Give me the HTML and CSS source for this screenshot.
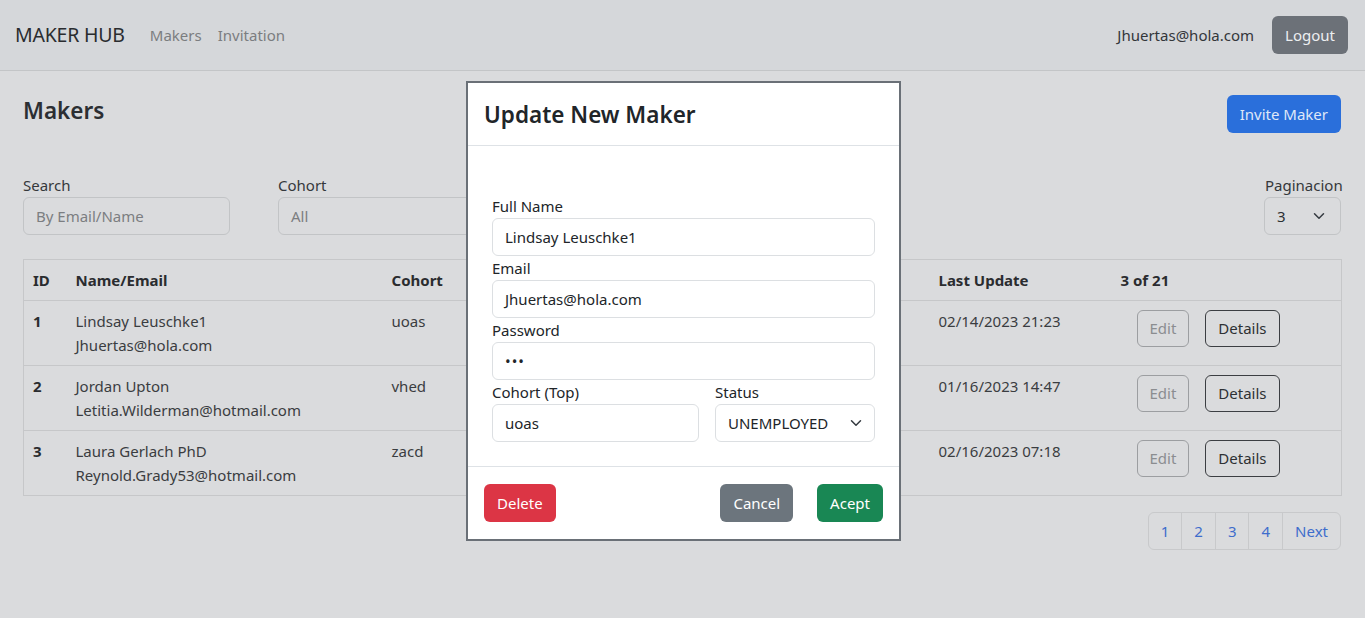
FILE: index.html
```html
<!DOCTYPE html>
<html lang="en">
<head>
<meta charset="utf-8">
<title>Maker Hub</title>
<link rel="stylesheet" href="styles.css">
</head>
<body>
<header class="navbar">
  <div class="nav-left">
    <span class="brand">MAKER HUB</span>
    <nav class="nav-links">
      <a class="nav-link">Makers</a>
      <a class="nav-link">Invitation</a>
    </nav>
  </div>
  <div class="nav-right">
    <span class="user">Jhuertas@hola.com</span>
    <button class="btn btn-logout">Logout</button>
  </div>
</header>

<main class="container">
  <div class="title-row">
    <h1 class="page-title">Makers</h1>
    <button class="btn btn-invite">Invite Maker</button>
  </div>

  <div class="filters">
    <div class="field f-search">
      <label class="label">Search</label>
      <div class="input placeholder">By Email/Name</div>
    </div>
    <div class="field f-cohort">
      <label class="label">Cohort</label>
      <div class="input placeholder">All</div>
    </div>
    <div class="field f-page">
      <label class="label">Paginacion</label>
      <div class="input select">
        <span>3</span>
        <svg class="chev" width="12" height="12" viewBox="0 0 16 16"><path d="M2 5l6 6 6-6" fill="none" stroke="#343a40" stroke-width="2" stroke-linecap="round" stroke-linejoin="round"/></svg>
      </div>
    </div>
  </div>

  <table class="table">
    <colgroup>
      <col class="c-id"><col class="c-name"><col class="c-cohort"><col class="c-status"><col class="c-update"><col class="c-actions">
    </colgroup>
    <thead>
      <tr><th>ID</th><th>Name/Email</th><th>Cohort</th><th></th><th>Last Update</th><th>3 of 21</th></tr>
    </thead>
    <tbody>
      <tr>
        <td class="id">1</td>
        <td>Lindsay Leuschke1<br>Jhuertas@hola.com</td>
        <td>uoas</td>
        <td></td>
        <td>02/14/2023 21:23</td>
        <td class="actions"><button class="btn btn-edit">Edit</button><button class="btn btn-details">Details</button></td>
      </tr>
      <tr>
        <td class="id">2</td>
        <td>Jordan Upton<br>Letitia.Wilderman@hotmail.com</td>
        <td>vhed</td>
        <td></td>
        <td>01/16/2023 14:47</td>
        <td class="actions"><button class="btn btn-edit">Edit</button><button class="btn btn-details">Details</button></td>
      </tr>
      <tr>
        <td class="id">3</td>
        <td>Laura Gerlach PhD<br>Reynold.Grady53@hotmail.com</td>
        <td>zacd</td>
        <td></td>
        <td>02/16/2023 07:18</td>
        <td class="actions"><button class="btn btn-edit">Edit</button><button class="btn btn-details">Details</button></td>
      </tr>
    </tbody>
  </table>

  <div class="pagination">
    <a class="page-item first">1</a>
    <a class="page-item">2</a>
    <a class="page-item">3</a>
    <a class="page-item">4</a>
    <a class="page-item last">Next</a>
  </div>
</main>

<div class="modal">
  <div class="modal-header">
    <h2 class="modal-title">Update New Maker</h2>
  </div>
  <div class="modal-body">
    <label class="m-label">Full Name</label>
    <div class="m-input">Lindsay Leuschke1</div>
    <label class="m-label">Email</label>
    <div class="m-input">Jhuertas@hola.com</div>
    <label class="m-label">Password</label>
    <div class="m-input pw">&#8226;&#8226;&#8226;</div>
    <div class="m-grid">
      <div>
        <label class="m-label">Cohort (Top)</label>
        <div class="m-input">uoas</div>
      </div>
      <div>
        <label class="m-label">Status</label>
        <div class="m-input select">
          <span>UNEMPLOYED</span>
          <svg class="chev" width="12" height="12" viewBox="0 0 16 16"><path d="M2 5l6 6 6-6" fill="none" stroke="#343a40" stroke-width="2" stroke-linecap="round" stroke-linejoin="round"/></svg>
        </div>
      </div>
    </div>
  </div>
  <div class="modal-footer">
    <button class="btn btn-delete">Delete</button>
    <button class="btn btn-cancel">Cancel</button>
    <button class="btn btn-accept">Acept</button>
  </div>
</div>
</body>
</html>
```

FILE: styles.css
```css
* { box-sizing: border-box; }

body {
  margin: 0;
  font-family: "Noto Sans", "Open Sans", sans-serif;
  font-size: 15px;
  line-height: 24px;
  color: #2c2f33;
  background: #dadbdd;
}

.btn {
  font-family: inherit;
  font-size: 15px;
  line-height: 24px;
  padding: 6px 12px;
  border: 1px solid transparent;
  border-radius: 6px;
  cursor: pointer;
}

/* Navbar */
.navbar {
  height: 71px;
  border-bottom: 1px solid #c3c5c7;
  background: #d5d7da;
  display: flex;
  align-items: center;
  justify-content: space-between;
  padding: 0 17px 0 15px;
}
.nav-left { display: flex; align-items: center; }
.brand { font-size: 19.5px; color: #2a2c2f; letter-spacing: -0.2px; }
.nav-links { display: flex; margin-left: 17px; }
.nav-link { padding: 8px; color: #7b7d80; }
.nav-right { display: flex; align-items: center; gap: 18px; }
.user { color: #33363a; }
.btn-logout { background: #6c7178; color: #eceef0; }

/* Main */
.container { padding: 24px 24px 0 23px; }
.title-row { display: flex; justify-content: space-between; align-items: flex-start; }
.page-title { margin: 0; padding-top: 1px; font-size: 22.5px; line-height: 29px; font-weight: 600; color: #2c2f33; }
.btn-invite { margin-top: 0; background: #2a6fdb; color: #dfe8f8; }

.filters { margin-top: 40px; display: flex; align-items: flex-end; }
.label { display: block; color: #35383b; }
.input {
  height: 38px;
  border: 1px solid #c2c4c6;
  border-radius: 6px;
  padding: 6px 12px;
  background: #dadbdd;
}
.placeholder { color: #7c7e81; }
.f-search { width: 207px; margin-right: 48px; }
.f-cohort { width: 240px; }
.f-page { margin-left: auto; width: 77px; }
.f-page .label { margin-left: 1px; }
.select { display: flex; align-items: center; justify-content: space-between; padding-right: 15px; }

/* Table */
.table {
  margin-top: 24px;
  width: 100%;
  border-collapse: collapse;
  table-layout: fixed;
  border: 1px solid #c6c7c9;
}
.c-id { width: 43px; }
.c-name { width: 316px; }
.c-cohort { width: 268px; }
.c-status { width: 279px; }
.c-update { width: 182px; }
.c-actions { width: 230px; }
.table th, .table td {
  padding: 8px 9px;
  text-align: left;
  vertical-align: top;
  border-bottom: 1px solid #c6c7c9;
}
.table th { font-weight: 700; color: #2a2c2f; }
.table td { color: #3a3d41; }
.table td.id { font-weight: 700; color: #2a2c2f; }
.actions { padding-left: 25px !important; white-space: nowrap; }
.btn-edit, .btn-details {
  margin-top: 1px;
  line-height: 23px;
  background: transparent;
}
.btn-edit { border-color: #9c9ea1; color: #8b8d90; }
.btn-details { margin-left: 16px; border-color: #3b3e42; color: #2e3134; }

/* Pagination */
.pagination { margin-top: 16px; display: flex; justify-content: flex-end; }
.page-item {
  padding: 6px 12px;
  border: 1px solid #c8c9cb;
  margin-left: -1px;
  color: #3e6dcc;
  line-height: 24px;
}
.page-item.first { border-radius: 6px 0 0 6px; }
.page-item.last { border-radius: 0 6px 6px 0; }

/* Modal */
.modal {
  position: absolute;
  left: 466px;
  top: 81px;
  width: 435px;
  height: 460px;
  background: #fff;
  border: 2px solid #6a7077;
  color: #212529;
  display: flex;
  flex-direction: column;
}
.modal-header { padding: 17px 16px 16px; border-bottom: 1px solid #dee2e6; }
.modal-title { margin: 0; font-size: 22.5px; line-height: 29px; font-weight: 600; }
.modal-body { padding: 48px 24px 24px; }
.m-label { display: block; }
.m-input {
  height: 38px;
  border: 1px solid #dcdfe2;
  border-radius: 6px;
  padding: 6px 12px;
  background: #fff;
}
.pw { letter-spacing: 1px; }
.m-grid { display: grid; grid-template-columns: 207px 1fr; gap: 16px; }
.modal-footer {
  flex: 1;
  border-top: 1px solid #dee2e6;
  padding: 0 16px;
  display: flex;
  align-items: center;
  gap: 24px;
}
.btn-delete { background: #dc3545; color: #fff; margin-right: auto; }
.btn-cancel { background: #6c757d; color: #fff; }
.btn-accept { background: #198754; color: #fff; }
```
